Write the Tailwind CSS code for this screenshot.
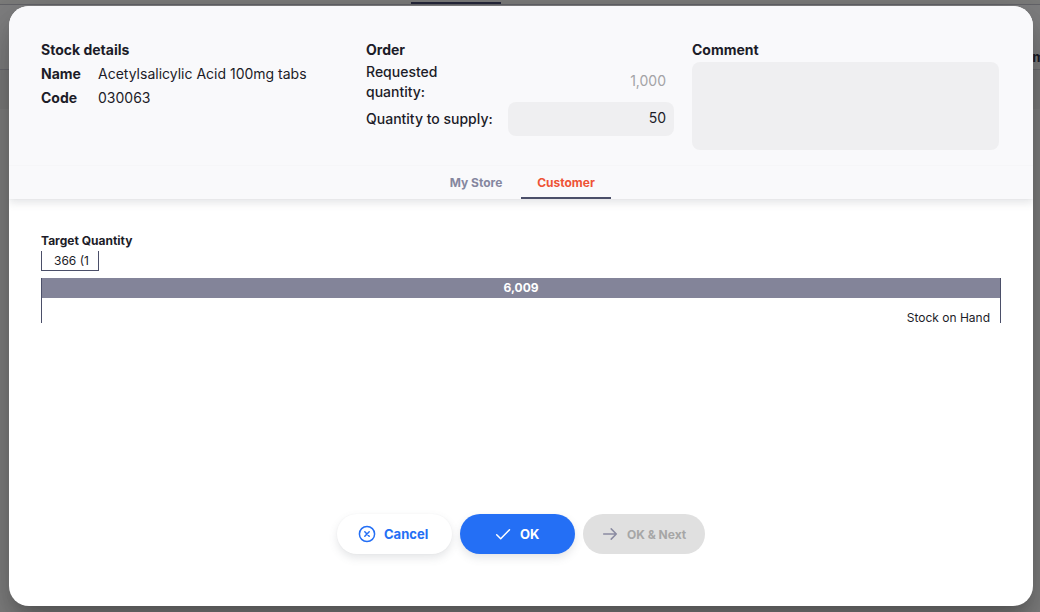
<!DOCTYPE html>
<html lang="en">
<head>
<meta charset="utf-8">
<title>Stock details</title>
<script src="https://cdn.jsdelivr.net/npm/@tailwindcss/browser@4"></script>
</head>
<body class="relative h-[612px] w-[1040px] overflow-hidden bg-[#7f7f7f] font-['Inter',sans-serif] text-[#1c1c28]">
  <!-- dimmed page behind the dialog -->
  <div aria-hidden="true" class="flex h-full flex-col">
    <div class="flex h-1 shrink-0 bg-[#7c7c7b] pl-[411px] pt-0.5"><div class="h-0.5 w-[90px] bg-[#25273a]"></div></div>
    <div class="flex h-[66px] shrink-0 items-end justify-end overflow-hidden border-y border-t-[#646469] border-b-[#6c6c72] bg-[#7f7f80] pb-[2px]"><span class="-mr-[5px] text-[14px] font-bold leading-[20px]">m</span></div>
    <div class="h-[39px] shrink-0 bg-[#7b7b7b]"></div>
  </div>
  <main class="absolute left-[9px] top-[6px] flex h-[600px] w-[1024px] flex-col overflow-hidden rounded-[20px] bg-white shadow-[0_11px_15px_-7px_rgba(0,0,0,0.2),0_24px_38px_3px_rgba(0,0,0,0.14),0_9px_46px_8px_rgba(0,0,0,0.12)]">
    <header class="shrink-0 bg-[#f9f9fb] shadow-[0_4px_8px_rgba(96,97,112,0.16),0_0_2px_rgba(40,41,61,0.04)]">
      <div class="flex h-[159px] px-8 pt-[34px] text-[14px] leading-5">
        <section class="w-[325px]">
          <h2 class="font-bold">Stock details</h2>
          <dl class="mt-1 grid grid-cols-[57px_1fr] gap-y-1">
            <dt class="font-bold">Name</dt><dd>Acetylsalicylic Acid 100mg tabs</dd>
            <dt class="font-bold">Code</dt><dd>030063</dd>
          </dl>
        </section>
        <section class="w-[326px]">
          <h2 class="font-bold">Order</h2>
          <div class="mt-[2px] flex h-10 items-center">
            <div class="w-[142px] pr-10 font-medium">Requested quantity:</div>
            <div class="w-[166px] pb-0.5 pr-2 text-right text-[#a3a3a6]">1,000</div>
          </div>
          <div class="flex h-[34px] items-center">
            <div class="w-[142px] font-medium">Quantity to supply:</div>
            <div class="h-[34px] w-[166px] rounded-lg bg-[#efeff1] pr-2 text-right leading-8">50</div>
          </div>
        </section>
        <section class="w-[307px]">
          <h2 class="font-bold">Comment</h2>
          <div class="mt-[2px] h-[88px] rounded-lg bg-[#efeff1]"></div>
        </section>
      </div>
      <nav class="flex h-[34px] justify-center border-t border-[#f6f6f8] text-[12px] font-bold leading-[34px]">
        <div class="w-[90px] text-center text-[#85879f]">My Store</div>
        <div class="w-[90px] border-b-2 border-[#4b4f69] text-center text-[#ee5335]">Customer</div>
      </nav>
    </header>
    <section class="px-8 pt-8 text-[12px]">
      <h3 class="h-5 font-bold leading-5">Target Quantity</h3>
      <div class="h-5 w-[58px] border-x border-b border-[#4b4f69] pl-3 leading-5">366 (1</div>
      <div class="mt-[7px] h-[45px] border-x border-[#4b4f69]">
        <div class="h-5 bg-[#838499] text-center font-bold leading-5 text-white">6,009</div>
        <div class="pr-2.5 pt-2.5 text-right leading-5">Stock on Hand</div>
      </div>
    </section>
    <footer class="mb-[52px] mt-auto flex justify-center gap-2 text-[13px] font-bold">
      <button class="flex h-10 w-[115px] items-center rounded-full bg-white pl-[20px] text-[#246ff5] shadow-[0_4px_8px_rgba(96,97,112,0.16),0_0_2px_rgba(40,41,61,0.04)]">
        <svg class="mr-[7px] size-5" viewBox="0 0 20 20" fill="none" stroke="currentColor" stroke-width="1.5" stroke-linecap="round"><circle cx="10" cy="10" r="7.6"/><path d="M7.8 7.8l4.4 4.4m0-4.4l-4.4 4.4"/></svg><span class="pt-px">Cancel</span>
      </button>
      <button class="flex h-10 w-[115px] items-center rounded-full bg-[#246ff5] pl-[33px] text-white shadow-[0_4px_8px_rgba(96,97,112,0.16),0_0_2px_rgba(40,41,61,0.04)]">
        <svg class="mr-[7px] size-5" viewBox="0 0 20 20" fill="none" stroke="currentColor" stroke-width="1.5" stroke-linecap="round" stroke-linejoin="round"><path d="M3.7 10.8l4 4 8.8-9"/></svg><span class="pt-px">OK</span>
      </button>
      <button disabled class="flex h-10 w-[122px] items-center rounded-full bg-[#e0e0e0] pl-[17px] text-[12px] text-[#a6a6a6]">
        <svg class="mr-[7px] size-5 text-[#8a8ba1]" viewBox="0 0 20 20" fill="none" stroke="currentColor" stroke-width="1.5" stroke-linecap="round" stroke-linejoin="round"><path d="M3.7 10h12.6M11.2 4.9l5.1 5.1-5.1 5.1"/></svg><span class="pt-px">OK &amp; Next</span>
      </button>
    </footer>
  </main>
</body>
</html>
